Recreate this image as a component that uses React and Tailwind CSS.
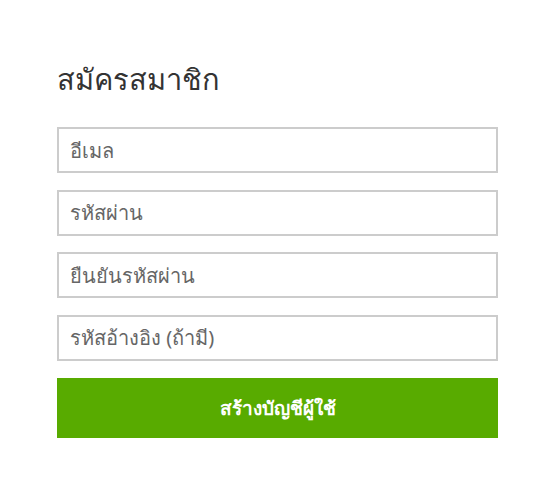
export default function App() {
  const field =
    'h-[46px] w-full border-2 border-[#ccc] px-[11px] text-[20px] text-[#333] placeholder:text-[#666] outline-none'

  return (
    <div className="min-h-[497px] bg-white" style={{ fontFamily: '"Noto Sans", "Liberation Sans", sans-serif' }}>
      <div className="pl-[57px] pt-[58px]">
        <div className="w-[441px]">
          <h1 className="text-[29px] leading-[42px] text-[#333]">สมัครสมาชิก</h1>
          <form className="mt-[27px] flex flex-col gap-[16.67px]">
            <input type="email" placeholder="อีเมล" className={field} />
            <input type="password" placeholder="รหัสผ่าน" className={field} />
            <input type="password" placeholder="ยืนยันรหัสผ่าน" className={field} />
            <input type="text" placeholder="รหัสอ้างอิง (ถ้ามี)" className={field} />
          </form>
          <button type="button" className="mt-[17px] h-[60px] w-full bg-[#58ab00] text-[19px] font-bold text-white">
            สร้างบัญชีผู้ใช้
          </button>
        </div>
      </div>
    </div>
  )
}
